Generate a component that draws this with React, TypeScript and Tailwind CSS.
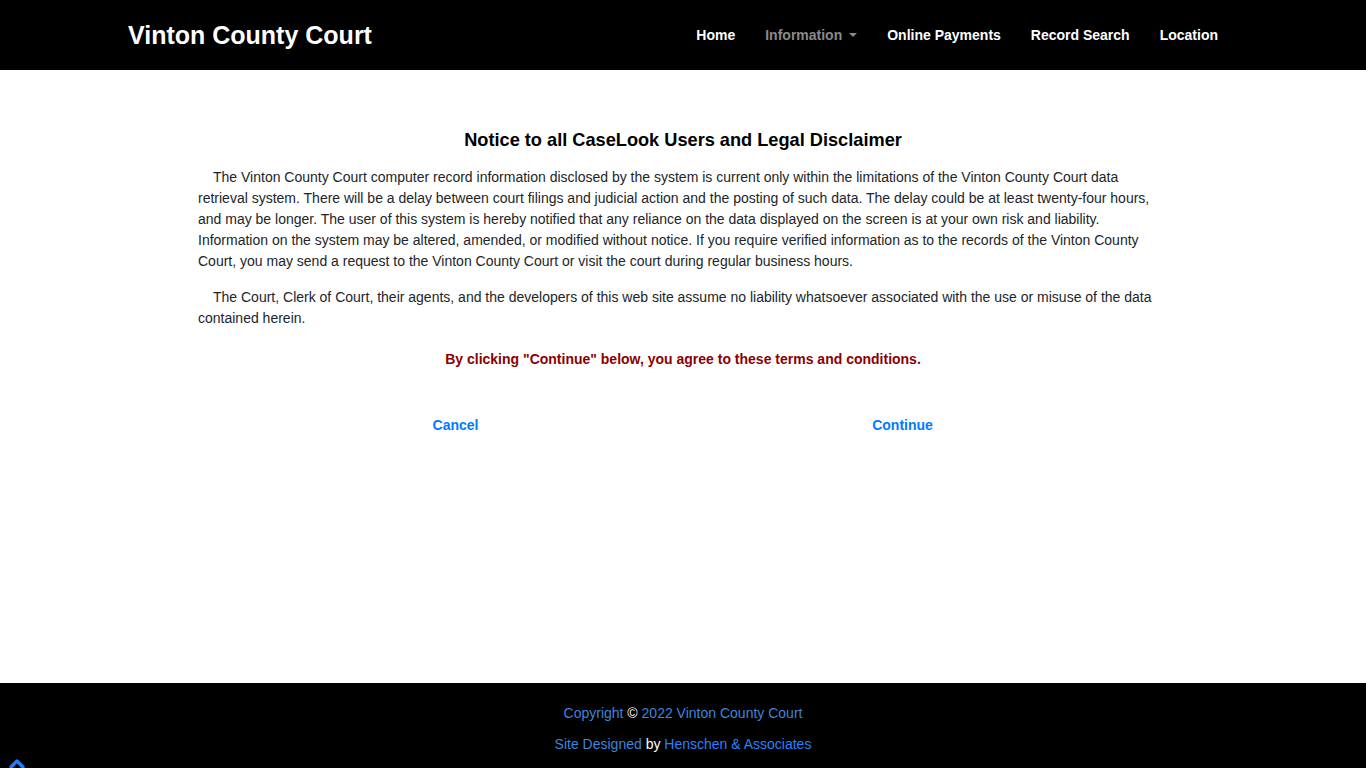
import { ChevronUp } from 'lucide-react';

const navItems = ['Home', 'Information', 'Online Payments', 'Record Search', 'Location'];

function Header() {
  return (
    <header className="h-[70px] bg-black">
      <div className="mx-auto flex h-full w-[1110px] items-center justify-between pr-[5px]">
        <a href="#" className="text-[25px] font-bold leading-none text-white">
          Vinton County Court
        </a>
        <nav className="flex items-center">
          {navItems.map((item) => (
            <a
              key={item}
              href="#"
              className={`flex items-center px-[15px] text-[14px] font-bold ${
                item === 'Information' ? 'text-[#8a8a8a]' : 'text-white'
              }`}
            >
              {item}
              {item === 'Information' && (
                <span className="ml-[7px] inline-block h-0 w-0 border-x-[4px] border-t-[4px] border-x-transparent border-t-[#8a8a8a]" />
              )}
            </a>
          ))}
        </nav>
      </div>
    </header>
  );
}

function Disclaimer() {
  return (
    <main className="h-[613px] bg-white">
      <div className="mx-auto w-[970px] pt-[58px] text-[14px] leading-[21px] text-[#212529]">
        <h1 className="mb-[15px] text-center text-[18.2px] font-bold leading-[24px] text-black">
          Notice to all CaseLook Users and Legal Disclaimer
        </h1>
        <p className="mb-[15px] indent-[15px]">
          The Vinton County Court computer record information disclosed by the system is current only within the
          limitations of the Vinton County Court data retrieval system. There will be a delay between court filings and
          judicial action and the posting of such data. The delay could be at least twenty-four hours, and may be longer.
          The user of this system is hereby notified that any reliance on the data displayed on the screen is at your own
          risk and liability. Information on the system may be altered, amended, or modified without notice. If you
          require verified information as to the records of the Vinton County Court, you may send a request to the Vinton
          County Court or visit the court during regular business hours.
        </p>
        <p className="indent-[15px]">
          The Court, Clerk of Court, their agents, and the developers of this web site assume no liability whatsoever
          associated with the use or misuse of the data contained herein.
        </p>
        <p className="mt-[20px] text-center font-bold text-[#8b0000]">
          By clicking "Continue" below, you agree to these terms and conditions.
        </p>
        <div className="ml-[34px] mt-[45px] grid w-[894px] grid-cols-2 text-center font-bold">
          <a href="#" className="text-[#007bff]">
            Cancel
          </a>
          <a href="#" className="text-[#007bff]">
            Continue
          </a>
        </div>
      </div>
    </main>
  );
}

function Footer() {
  return (
    <footer className="h-[120px] bg-black pt-[20px] text-center text-[14px] leading-[21px]">
      <p className="mb-[10px]">
        <span className="text-[#3d86dc]">Copyright </span>
        <span className="text-white">©</span>
        <span className="text-[#3d86dc]"> 2022 Vinton County Court</span>
      </p>
      <p>
        <span className="text-[#3d86dc]">Site Designed </span>
        <span className="text-white">by </span>
        <span className="text-[#2a80ff]">Henschen &amp; Associates</span>
      </p>
    </footer>
  );
}

export default function App() {
  return (
    <div className="relative font-['Liberation_Sans',Arial,sans-serif]">
      <Header />
      <Disclaimer />
      <Footer />
      {/* back-to-top arrow */}
      <a href="#" className="fixed bottom-[-8px] left-[5px] text-[#1a7cff]">
        <ChevronUp size={24} strokeWidth={3.5} />
      </a>
    </div>
  );
}
